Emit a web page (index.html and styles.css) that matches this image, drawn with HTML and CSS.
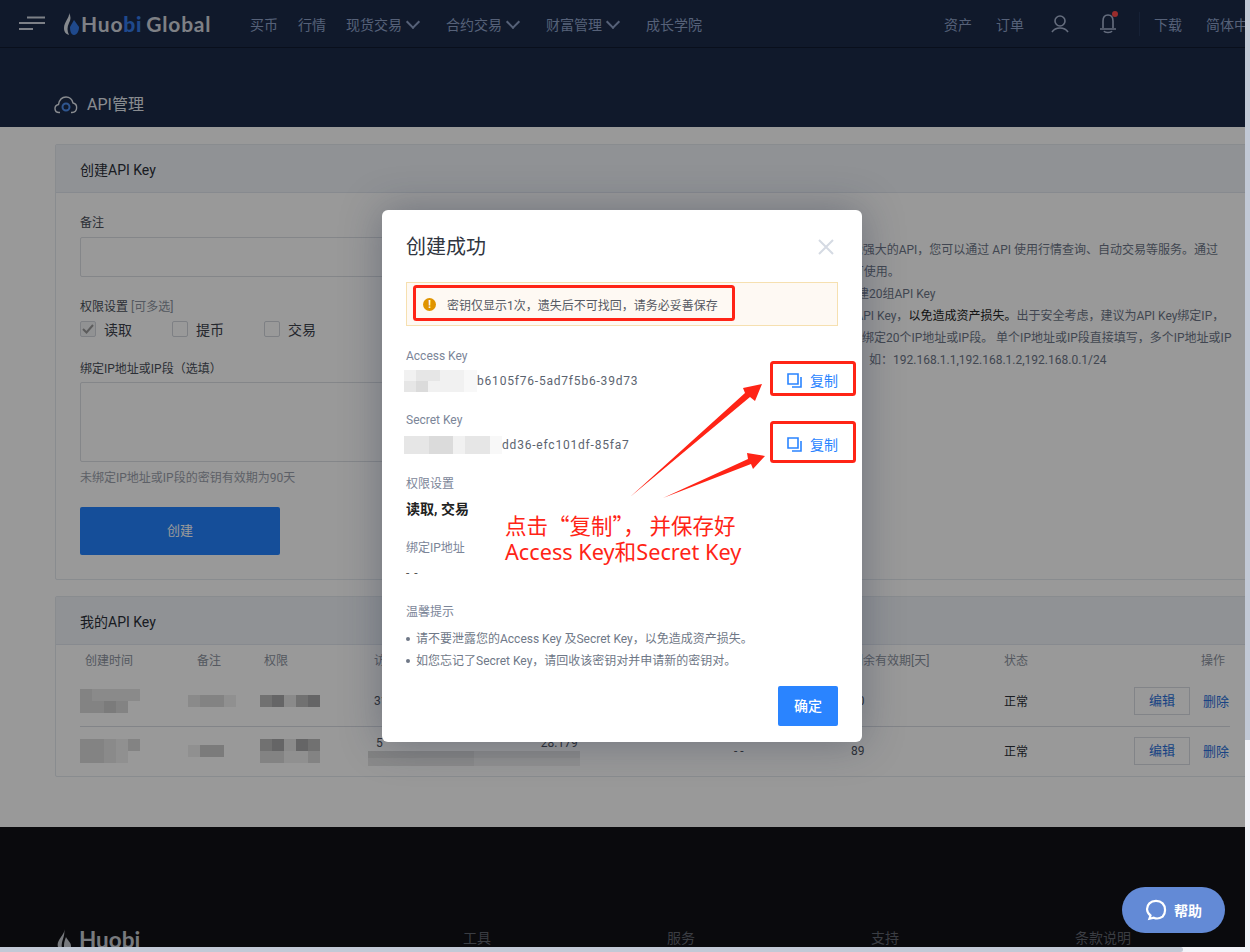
FILE: index.html
```html
<!DOCTYPE html>
<html lang="zh-CN">

<head>
    <meta charset="UTF-8">
    <title>API管理</title>
    <link rel="stylesheet" href="styles.css">
</head>

<body>
    <div class="viewport">
        <div class="page">
            <header class="header">
                <svg class="burger" width="28" height="16" viewBox="0 0 28 16">
                    <path d="M9 1.5H27M1 7H27M1 13H15" stroke="#d0d6e2" stroke-width="2" fill="none" />
                </svg>
                <div class="logo">
                    <svg width="18" height="24" viewBox="0 0 18 24">
                        <path d="M6 1C7 5 1 10 1 16 1 20 3 22 6 23 4 19 4 15 6 11 8 8 8 4 6 1z" fill="#dfe4ec" />
                        <path d="M11 8l5 7c0 4 -2 8 -5 8 -3 0 -4 -4 -4 -8z" fill="#347bea" />
                    </svg>
                    <span class="logo-text">Huo<b>bi</b> Global</span>
                </div>
                <nav class="nav">
                    <a>买币</a>
                    <a>行情</a>
                    <a class="drop">现货交易</a>
                    <a class="drop">合约交易</a>
                    <a class="drop">财富管理</a>
                    <a>成长学院</a>
                </nav>
                <div class="nav-right">
                    <a>资产</a>
                    <a>订单</a>
                    <svg class="icon-user" width="18" height="18" viewBox="0 0 18 18">
                        <circle cx="9" cy="6" r="5" fill="none" stroke="#a9b6d2" stroke-width="1.6" />
                        <path d="M1 17c2 -3 5 -4 8 -4s6 1 8 4" fill="none" stroke="#a9b6d2" stroke-width="1.6" />
                    </svg>
                    <svg class="icon-bell" width="20" height="24" viewBox="0 0 20 24">
                        <path d="M4 17V10c0 -4 2 -6 5 -6s5 2 5 6v7M1 18h16" fill="none" stroke="#a9b6d2" stroke-width="1.6" />
                        <path d="M5 20c1 2 7 2 8 0" fill="none" stroke="#a9b6d2" stroke-width="1.6" />
                        <circle cx="16" cy="3" r="3" fill="#ff4a4a" />
                    </svg>
                    <i class="nav-line"></i>
                    <a>下载</a>
                    <a>简体中文</a>
                </div>
            </header>

            <section class="hero">
                <svg width="24" height="18" viewBox="0 0 24 18">
                    <path d="M6 16.500h-1c-5 0 -5.500 -7 -.5 -8C5.500 3 9 1 12 1c3.500 0 6 2 7 6 5 1 5 9 -1 9.500h-1" fill="none" stroke="#e5e9f0" stroke-width="1.4" />
                    <circle cx="12" cy="11" r="3.500" fill="none" stroke="#4f8fef" stroke-width="2" />
                </svg>
                <h1>API管理</h1>
            </section>

            <main class="main">
                <section class="card">
                    <h2 class="card-head">创建API Key</h2>
                    <div class="create">
                        <form class="form">
                            <div class="lbl">备注</div>
                            <div class="input"></div>
                            <div class="lbl lbl-gap">权限设置 <span class="muted">[可多选]</span></div>
                            <div class="checks">
                                <label class="check"><i class="box on"><svg width="12" height="10" viewBox="0 0 12 10"><path d="M1 5l3.500 3.500L11 1" fill="none" stroke="#9a9a9a" stroke-width="2" /></svg></i>读取</label>
                                <label class="check"><i class="box"></i>提币</label>
                                <label class="check"><i class="box"></i>交易</label>
                            </div>
                            <div class="lbl lbl-gap">绑定IP地址或IP段（选填）</div>
                            <div class="area"></div>
                            <p class="hint">未绑定IP地址或IP段的密钥有效期为90天</p>
                            <div class="create-btn">创建</div>
                        </form>
                        <div class="notes">
                            <p>欢迎使用 Huobi Global 为您 提供的功能强大的API，您可以通过 API 使用行情查询、自动交易等服务。通过</p>
                            <p>查看接口文档，了解API详细信息后即可使用。</p>
                            <p>每个用户账户最多可以同时在本页面创建20组API Key</p>
                            <p>注意，请不要泄露您的 Access Key 及 API Key，<em>以免造成资产损失。</em>出于安全考虑，建议为API Key绑定IP，</p>
                            <p>为了账户的安全，每个API Key最多可以绑定20个IP地址或IP段。 单个IP地址或IP段直接填写，多个IP地址或IP</p>
                            <p>多个地址时，段之间请用半角逗号分隔，如：192.168.1.1,192.168.1.2,192.168.0.1/24</p>
                        </div>
                    </div>
                </section>

                <section class="card card-list">
                    <h2 class="card-head">我的API Key</h2>
                    <div class="grid-row thead">
                        <span>创建时间</span>
                        <span>备注</span>
                        <span>权限</span>
                        <span>访问</span>
                        <span></span>
                        <span>剩余有效期[天]</span>
                        <span>状态</span>
                        <span>操作</span>
                    </div>
                    <div class="grid-row trow">
                        <span class="mos w60"><i class="s3"></i><i class="s2"></i><i class="s2"></i><i class="s2"></i><i class="s2"></i><i class="s3"></i><i class="s3"></i><i class="s4"></i><i class="s3"></i></span>
                        <span class="mos w48"><i class="s2"></i><i class="s3"></i><i class="s3"></i><i class="s1"></i></span>
                        <span class="mos w60"><i class="s5"></i><i class="s6"></i><i class="s2"></i><i class="s5"></i><i class="s6"></i></span>
                        <span class="txt key-col">31</span>
                        <span></span>
                        <span class="txt">90</span>
                        <span class="ok">正常</span>
                        <span class="ops"><a class="edit">编辑</a><a class="del">删除</a></span>
                    </div>
                    <div class="grid-row trow">
                        <span class="mos w60"><i class="s3"></i><i class="s3"></i><i class="s2"></i><i class="s1"></i><i class="s3"></i><i class="s3"></i><i class="s3"></i><i class="s2"></i><i class="s1"></i></span>
                        <span class="mos w36"><i class="s1"></i><i class="s4"></i><i class="s4"></i></span>
                        <span class="mos w60"><i class="s5"></i><i class="s6"></i><i class="s2"></i><i class="s6"></i><i class="s5"></i><i class="s3"></i><i class="s3"></i><i class="s1"></i><i class="s1"></i><i class="s3"></i></span>
                        <span class="key-stack">
                            <span class="txt key-under"><b>5</b><b>28.179</b></span>
                            <span class="mos w212"><i class="s3"></i><i class="s3"></i><i class="s2"></i><i class="s2"></i><i class="s2"></i><i class="s2"></i><i class="s1"></i><i class="s1"></i></span>
                        </span>
                        <span class="txt">- -</span>
                        <span class="txt">89</span>
                        <span class="ok">正常</span>
                        <span class="ops"><a class="edit">编辑</a><a class="del">删除</a></span>
                    </div>
                </section>
            </main>

            <footer class="footer">
                <div class="foot-logo">
                    <svg width="18" height="24" viewBox="0 0 16 24">
                        <path d="M8 0c1 4 -1 6 -3 9C2 13 1 16 2 19c1 3 3 5 6 5 4 0 7 -2 7 -6 0 -4 -4 -6 -5 -9 -1 3 -2 5 -2 8 0 3 0 5 1 7C5 22 5 16 7 11 8 8 9 4 8 0z" fill="#c8cbd2" />
                    </svg>
                    <span>Huobi</span>
                </div>
                <div class="foot-cols">
                    <span>工具</span>
                    <span>服务</span>
                    <span>支持</span>
                    <span>条款说明</span>
                </div>
            </footer>

            <div class="mask"></div>

            <div class="modal">
                <div class="modal-head">
                    <h3>创建成功</h3>
                    <svg width="16" height="16" viewBox="0 0 16 16">
                        <path d="M1 1l14 14M15 1L1 15" stroke="#d5dae3" stroke-width="2" />
                    </svg>
                </div>
                <div class="alert">
                    <i class="alert-icon">!</i>
                    <span>密钥仅显示1次，遗失后不可找回，请务必妥善保存</span>
                </div>
                <div class="m-label first">Access Key</div>
                <div class="key-row">
                    <span class="key">
                        <span class="mos w72"><i class="s1"></i><i class="s2"></i><i class="s2"></i><i class="s1"></i><i class="s1"></i><i class="s0"></i><i class="s2"></i><i class="s3"></i><i class="s1"></i><i class="s1"></i><i class="s1"></i><i class="s0"></i></span>b6105f76-5ad7f5b6-39d73
                    </span>
                    <a class="copy">
                        <svg width="16" height="15" viewBox="0 0 16 15"><path d="M1 1h10v10H1zM14 4v10H5" fill="none" stroke="#2a84ff" stroke-width="1.600" /></svg>复制
                    </a>
                </div>
                <div class="m-label">Secret Key</div>
                <div class="key-row">
                    <span class="key">
                        <span class="mos w96"><i class="s2"></i><i class="s2"></i><i class="s3"></i><i class="s3"></i><i class="s1"></i><i class="s2"></i><i class="s2"></i><i class="s0"></i></span>dd36-efc101df-85fa7
                    </span>
                    <a class="copy">
                        <svg width="16" height="15" viewBox="0 0 16 15"><path d="M1 1h10v10H1zM14 4v10H5" fill="none" stroke="#2a84ff" stroke-width="1.600" /></svg>复制
                    </a>
                </div>
                <div class="m-label sec">权限设置</div>
                <div class="m-value">读取, 交易</div>
                <div class="m-label sec2">绑定IP地址</div>
                <div class="m-value plain">- -</div>
                <div class="m-label sec2">温馨提示</div>
                <ul class="tips">
                    <li>请不要泄露您的Access Key 及Secret Key，以免造成资产损失。</li>
                    <li>如您忘记了Secret Key，请回收该密钥对并申请新的密钥对。</li>
                </ul>
                <div class="modal-foot">
                    <a class="ok-btn">确定</a>
                </div>
            </div>

            <!-- 标注 -->
            <svg class="marks" width="1245" height="947" viewBox="0 0 1245 947">
                <g fill="none" stroke="#ff2416" stroke-width="3">
                    <rect x="414.500" y="286.500" width="319" height="33" rx="2" />
                    <rect x="771.500" y="362.500" width="83" height="32" rx="2" />
                    <rect x="771.500" y="422.500" width="83" height="39" rx="2" />
                </g>
                <g fill="#ff2416">
                    <polygon points="630,497 745,393 743,388 762,384 755,401 750,397" />
                    <polygon points="663,498 748,459 747,453 765,456 753,469 751,464" />
                </g>
            </svg>
            <div class="note-red">
                <div class="note-cn">点击“复制”， 并保存好</div>
                <div class="note-en">Access Key和Secret Key</div>
            </div>

            <a class="help">
                <svg width="22" height="22" viewBox="0 0 20 20">
                    <path d="M4 18l1 -3C1 12 1 7 4 4c3 -3 9 -3 12 0 3 3 3 9 0 12 -3 2 -6 2 -8 1z" fill="none" stroke="#fff" stroke-width="2" />
                </svg>帮助
            </a>
        </div>
        <div class="vbar"><i></i></div>
        <div class="hbar"><i></i></div>
    </div>
</body>

</html>
```

FILE: styles.css
```css
* {
    box-sizing: border-box;
}

body {
    margin: 0;
    background: #f2f3f9;
    font-family: Roboto, "Noto Sans CJK SC", sans-serif;
    color: #333;
    overflow: hidden;
}

h1,
h2,
h3,
p,
ul {
    margin: 0;
    padding: 0;
    font-weight: normal;
}

i,
em {
    font-style: normal;
}

.viewport {
    display: grid;
    grid-template-columns: 1245px 5px;
    grid-template-rows: 947px 5px;
    width: 1250px;
    height: 952px;
    overflow: hidden;
}

.page {
    position: relative;
    overflow: hidden;
    background: #fff;
}

/* 滚动条 */
.vbar i {
    display: block;
    height: 740px;
    background: #c2c9d6;
}

.hbar {
    grid-column: 1 / 3;
}

.hbar i {
    display: block;
    width: 1183px;
    height: 5px;
    border-radius: 0 3px 3px 0;
    background: #c2c9d6;
}

/* 顶部 */
.header {
    display: flex;
    align-items: center;
    width: 1300px;
    height: 48px;
    background: #1b2a48;
    border-bottom: 1px solid #101a30;
    padding-left: 18px;
    font-size: 14px;
    color: #8fa2c8;
}

.burger {
    margin-top: 1px;
}

.logo {
    display: flex;
    align-items: center;
    margin-left: 17px;
    width: 187px;
}

.logo-text {
    font-family: Lato, sans-serif;
    font-size: 21px;
    font-weight: 700;
    letter-spacing: .8px;
    word-spacing: -2px;
    color: #d2d6de;
    white-space: nowrap;
}

.logo-text b {
    color: #347bea;
}

.nav {
    display: flex;
    gap: 20px;
}

.drop {
    display: flex;
    align-items: center;
    margin-right: 24px;
    position: relative;
}

.drop::after {
    content: "";
    position: absolute;
    right: -16px;
    top: 3px;
    width: 8px;
    height: 8px;
    border: solid #8fa2c8;
    border-width: 0 2px 2px 0;
    transform: rotate(45deg);
}

.nav-right {
    display: flex;
    align-items: center;
    margin-left: 242px;
    gap: 24px;
    white-space: nowrap;
}

.icon-user {
    margin-left: 3px;
}

.icon-bell {
    margin-left: 6px;
    margin-top: -2px;
}

.nav-line {
    width: 1px;
    height: 24px;
    margin: 0 -10px 0 -4px;
    background: #26375a;
}

.hero {
    display: flex;
    align-items: center;
    gap: 9px;
    height: 79px;
    padding: 34px 0 0 54px;
    background: #1b2a48;
    color: #e5e9f0;
}

.hero h1 {
    font-size: 16px;
    line-height: 24px;
}

/* 主体 */
.main {
    padding: 17px 0 50px 55px;
}

.card {
    width: 1210px;
    border: 1px solid #e5e9ef;
    border-radius: 2px;
    background: #fff;
}

.card-list {
    margin-top: 16px;
}

.card-head {
    height: 48px;
    padding-left: 24px;
    font-size: 14px;
    line-height: 51px;
    color: #2b2f38;
    background: #f0f4f8;
    border-bottom: 1px solid #e1e7ee;
}

.create {
    display: flex;
}

.form {
    flex: none;
    width: 540px;
    padding: 21px 0 24px 24px;
}

.lbl {
    font-size: 12px;
    line-height: 18px;
    color: #4a4f5a;
}

.lbl-gap {
    margin-top: 21px;
}

.muted {
    color: #8c93a0;
}

.input {
    height: 40px;
    margin-top: 5px;
    border: 1px solid #dcdfe5;
    border-radius: 2px;
}

.checks {
    display: flex;
    margin: 5px 0 23px;
}

.check {
    display: flex;
    align-items: center;
    width: 92px;
    height: 16px;
    font-size: 14px;
    color: #3c414c;
}

.box {
    display: flex;
    align-items: center;
    justify-content: center;
    width: 16px;
    height: 16px;
    margin-right: 8px;
    border: 1px solid #d2d6dd;
    border-radius: 2px;
}

.box.on {
    background: #f2f3f6;
}

.area {
    height: 80px;
    margin-top: 4px;
    border: 1px solid #dcdfe5;
    border-radius: 2px;
}

.hint {
    margin-top: 7px;
    font-size: 12px;
    line-height: 18px;
    color: #9ba1ac;
}

.create-btn {
    width: 200px;
    height: 48px;
    margin-top: 20px;
    border-radius: 2px;
    background: #2383ff;
    color: #fff;
    font-size: 13px;
    line-height: 48px;
    text-align: center;
}

.notes {
    padding: 46px 0 0 57px;
    font-size: 12px;
    line-height: 22px;
    color: #6d7688;
    white-space: nowrap;
}

.notes em {
    color: #222;
}

/* 列表 */
.grid-row {
    display: grid;
    grid-template-columns: 108px 72px 108px 366px 117px 153px 130px 96px;
    align-items: center;
    width: 1150px;
    margin-left: 24px;
    font-size: 12px;
}

.thead {
    height: 30px;
    padding-bottom: 2px;
    color: #8c93a0;
}

.thead span:nth-child(1) {
    padding-left: 5px;
}

.thead span:nth-child(2) {
    padding-left: 9px;
}

.thead span:nth-child(3) {
    padding-left: 4px;
}

.thead span:nth-child(4) {
    padding-left: 6px;
}

.thead span:nth-child(6) {
    white-space: nowrap;
}

.thead span:nth-child(8) {
    text-align: right;
    padding-right: 5px;
}

.trow {
    height: 52px;
    border-bottom: 1px solid #d9dde3;
}

.trow:last-child {
    border-bottom: 0;
    height: 49px;
    padding-bottom: 2px;
}

.txt {
    font-size: 12px;
    color: #4a4f5a;
}

.key-col {
    padding-left: 6px;
}

.key-stack {
    display: grid;
    height: 40px;
}

.key-under {
    grid-area: 1 / 1;
    display: flex;
    gap: 158px;
    padding: 5px 0 0 8px;
}

.key-under b {
    font-weight: 400;
}

.key-stack .mos {
    grid-area: 1 / 1;
    align-self: end;
    margin-bottom: 5px;
}

.ok {
    color: #2b2f38;
}

.ops {
    display: flex;
    align-items: center;
    gap: 13px;
    white-space: nowrap;
}

.edit {
    width: 56px;
    height: 28px;
    border: 1px solid #d9dde3;
    text-align: center;
    line-height: 26px;
    font-size: 13px;
    color: #2a6fdb;
}

.del {
    font-size: 13px;
    color: #2a6fdb;
}

/* 马赛克 */
.mos {
    display: inline-flex;
    flex-wrap: wrap;
    flex: none;
    vertical-align: middle;
}

.mos i {
    width: 12px;
    height: 12px;
}

.w60 {
    width: 60px;
}

.w48 {
    width: 48px;
}

.w36 {
    width: 36px;
}

.w72 {
    width: 73px;
}

.w96 {
    width: 98px;
}

.w212 {
    width: 212px;
}

.w212 i {
    width: 53px;
    height: 7.500px;
}

.s0 {
    background: #f8f8f8;
}

.s1 {
    background: #f1f1f1;
}

.s2 {
    background: #e6e6e6;
}

.s3 {
    background: #dbdbdb;
}

.s4 {
    background: #cdcdcd;
}

.s5 {
    background: #bdbdbd;
}

.s6 {
    background: #a8a8aa;
}

/* 底部 */
.footer {
    display: flex;
    height: 120px;
    padding: 101px 0 0 55px;
    background: #111116;
    overflow: hidden;
}

.foot-logo {
    display: flex;
    align-items: flex-start;
    gap: 6px;
    width: 408px;
    margin-right: 0;
    flex: none;
    font-family: Lato, sans-serif;
    font-size: 22.500px;
    font-weight: 700;
    line-height: 24px;
    color: #c8cbd2;
}

.foot-cols {
    display: flex;
    flex: none;
    font-size: 14px;
    line-height: 20px;
    color: #626670;
}

.foot-cols span {
    flex: none;
    width: 204px;
}

/* 弹窗 */
.mask {
    position: absolute;
    inset: 0;
    background: rgba(0, 0, 0, .4);
}

.modal {
    position: absolute;
    left: 382px;
    top: 210px;
    width: 480px;
    height: 532px;
    padding: 23px 24px 0;
    border-radius: 6px;
    background: #fff;
    box-shadow: 0 0 40px rgba(30, 40, 70, .35);
}

.modal-head {
    display: flex;
    align-items: center;
    justify-content: space-between;
    height: 28px;
    padding-right: 4px;
}

.modal-head h3 {
    font-size: 20px;
    line-height: 28px;
    color: #30353f;
}

.alert {
    display: flex;
    align-items: center;
    gap: 11px;
    height: 44px;
    margin-top: 21px;
    padding-left: 16px;
    border: 1px solid #f6e0b0;
    background: #fef9f3;
    font-size: 12px;
    color: #565a63;
}

.alert-icon {
    width: 13px;
    height: 13px;
    border-radius: 50%;
    background: #e09400;
    color: #fff;
    font-size: 10px;
    font-weight: 700;
    line-height: 13px;
    text-align: center;
}

.m-label {
    margin-top: 19px;
    font-size: 12px;
    line-height: 18px;
    color: #7b8598;
}

.m-label.first {
    margin-top: 21px;
}

.m-label.sec {
    margin-top: 19px;
}

.m-label.sec2 {
    margin-top: 20px;
}

.key-row {
    display: flex;
    align-items: center;
    justify-content: space-between;
    height: 22px;
    margin-top: 5px;
}

.key {
    display: flex;
    align-items: center;
    margin-left: -2px;
    font-size: 12px;
    letter-spacing: .8px;
    color: #5c6470;
}

.key .mos i {
    width: 12.100px;
    height: 11px;
}

.key .w96 i {
    width: 12.250px;
    height: 18px;
}

.copy {
    display: flex;
    align-items: center;
    gap: 7px;
    margin-bottom: 2px;
    font-size: 14px;
    color: #2a84ff;
}

.m-value {
    margin-top: 6px;
    font-size: 14px;
    font-weight: 700;
    line-height: 20px;
    color: #222;
}

.m-value.plain {
    margin-top: 6px;
    font-size: 12px;
    font-weight: 400;
    letter-spacing: 1px;
    color: #555;
}

.tips {
    margin-top: 7px;
    list-style: none;
    font-size: 12px;
    line-height: 22px;
    color: #6f7887;
}

.tips li {
    position: relative;
    padding-left: 10px;
    white-space: nowrap;
}

.tips li::before {
    content: "";
    position: absolute;
    left: 0;
    top: 9px;
    width: 4px;
    height: 4px;
    border-radius: 50%;
    background: #6f7887;
}

.modal-foot {
    display: flex;
    justify-content: flex-end;
    margin-top: 14px;
}

.ok-btn {
    width: 60px;
    height: 40px;
    border-radius: 2px;
    background: #2a84ff;
    color: #fff;
    font-size: 14px;
    font-weight: 500;
    line-height: 40px;
    text-align: center;
}

/* 标注 */
.marks {
    position: absolute;
    left: 0;
    top: 0;
    pointer-events: none;
}

.note-red {
    position: absolute;
    left: 505px;
    top: 511px;
    font-family: "Noto Sans", "Noto Sans CJK SC", sans-serif;
    font-size: 21.700px;
    line-height: 27px;
    color: #ff2416;
    white-space: nowrap;
}

.note-cn {
    height: 27px;
    font-family: "Noto Sans CJK SC", sans-serif;
    font-size: 21.500px;
}

.note-en {
    height: 27px;
}

.help {
    position: absolute;
    left: 1122px;
    top: 887px;
    display: flex;
    align-items: center;
    justify-content: center;
    gap: 7px;
    width: 103px;
    height: 46px;
    border-radius: 23px;
    background: #638ad6;
    color: #fff;
    font-size: 14px;
    font-weight: 700;
}
```
